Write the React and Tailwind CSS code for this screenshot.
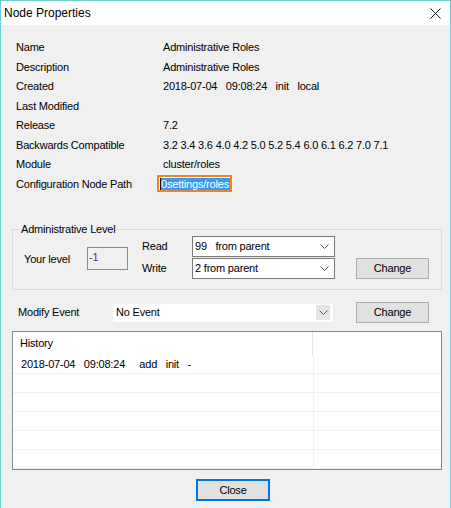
import React from 'react';

const fields = [
  ['Name', 'Administrative Roles'],
  ['Description', 'Administrative Roles'],
  ['Created', '2018-07-04   09:08:24   init   local'],
  ['Last Modified', ''],
  ['Release', '7.2'],
  ['Backwards Compatible', '3.2 3.4 3.6 4.0 4.2 5.0 5.2 5.4 6.0 6.1 6.2 7.0 7.1'],
  ['Module', 'cluster/roles'],
];

function Chevron() {
  return (
    <svg width="9" height="5" viewBox="0 0 9 5" className="shrink-0">
      <path d="M0.5 0.5 L4.5 4.5 L8.5 0.5" fill="none" stroke="#5a5a5a" strokeWidth="1" />
    </svg>
  );
}

function Combo({ value }) {
  return (
    <div className="w-[143px] h-[21px] border border-[#7a7a7a] bg-white flex items-center justify-between pl-[2px] pr-[5px]">
      <span className="whitespace-pre">{value}</span>
      <Chevron />
    </div>
  );
}

function Button({ children, focused }) {
  return (
    <div
      className={
        'flex items-center justify-center bg-[#e1e1e1] ' +
        (focused ? 'w-[74px] h-[22px] border-2 border-[#0078d7]' : 'w-[73px] h-[21px] border border-[#adadad]')
      }
    >
      {children}
    </div>
  );
}

export default function App() {
  const rows = [0, 1, 2, 3, 4, 5];

  return (
    <div className="w-[451px] h-[508px] border-x border-t border-[#6fcfd3] bg-[#f0f0f0] flex flex-col overflow-hidden font-['Liberation_Sans',Arial,sans-serif] text-[11px] tracking-[-0.2px] text-black">
      {/* title bar */}
      <div className="h-[24px] shrink-0 bg-white flex items-center justify-between pl-[3px] pr-[9px]">
        <span className="text-[12px] tracking-normal">Node Properties</span>
        <svg width="11" height="11" viewBox="0 0 11 11">
          <path d="M0.5 0.5 L10.5 10.5 M10.5 0.5 L0.5 10.5" stroke="#111" strokeWidth="1" />
        </svg>
      </div>

      <div className="flex flex-col pl-[11px] pr-[8px] pt-[12.5px]">
        {/* properties */}
        <div className="grid grid-cols-[147px_1fr] auto-rows-[19.5px] items-center pl-[4px]">
          {fields.map(([label, value]) => (
            <React.Fragment key={label}>
              <span>{label}</span>
              <span className="whitespace-pre">{value}</span>
            </React.Fragment>
          ))}
          <span>Configuration Node Path</span>
          <div>
            <div className="ml-[-6px] w-[75px] h-[17px] border-2 border-[#f5841f] bg-white flex items-center pl-[1px]">
              <span className="w-px h-[12px] bg-black"></span>
              <span className="bg-[#3399ff] text-white leading-[12px] pr-[1px]">0settings/roles</span>
            </div>
          </div>
        </div>

        {/* administrative level */}
        <fieldset className="mt-[28.5px] border border-[#dcdcdc]">
          <legend className="ml-[6px] px-[2px] leading-[14px]">Administrative Level</legend>
          <div className="flex items-start h-[53px]">
            <div className="w-[74px] pl-[11px] pt-[16px] leading-[14px]">Your level</div>
            <div className="w-[41px] h-[23px] mt-[11px] border border-[#8c8c8c] bg-[#f0f0f0] px-[1px] pt-[2px] leading-[14px] text-[#6d1f7a]">-1</div>
            <div className="ml-[14px] flex flex-col gap-[1px]">
              <div className="flex items-center">
                <span className="w-[50px]">Read</span>
                <Combo value="99   from parent" />
              </div>
              <div className="flex items-center">
                <span className="w-[50px]">Write</span>
                <Combo value="2 from parent" />
              </div>
            </div>
            <div className="ml-[21px] mt-[22px]">
              <Button>Change</Button>
            </div>
          </div>
        </fieldset>

        {/* modify event */}
        <div className="mt-[12px] h-[21px] flex items-center">
          <span className="w-[101px] pl-[6px]">Modify Event</span>
          <div className="w-[220px] h-[18px] bg-white flex items-center justify-between pl-[3px] pr-[3px]">
            <span>No Event</span>
            <div className="w-[14px] h-[15px] bg-[#e5e5e5] flex items-center justify-center">
              <Chevron />
            </div>
          </div>
          <div className="ml-[23px]">
            <Button>Change</Button>
          </div>
        </div>

        {/* history list */}
        <div className="mt-[8px] h-[139px] border border-[#828790] bg-white overflow-hidden flex flex-col">
          <div className="h-[23px] shrink-0 flex">
            <div className="w-[300px] border-r border-[#e5e5e5] pl-[7px] flex items-center">History</div>
          </div>
          {rows.map((i) => (
            <div key={i} className="h-[19px] shrink-0 flex border-b border-[#f0f0f0]">
              <div className="w-[301px] border-r border-[#f0f0f0] pl-[8px] flex items-center whitespace-pre">
                {i === 0 ? '2018-07-04   09:08:24     add   init   -' : ''}
              </div>
            </div>
          ))}
        </div>

        <div className="mt-[9px] ml-[184px]">
          <Button focused>Close</Button>
        </div>
      </div>
    </div>
  );
}
